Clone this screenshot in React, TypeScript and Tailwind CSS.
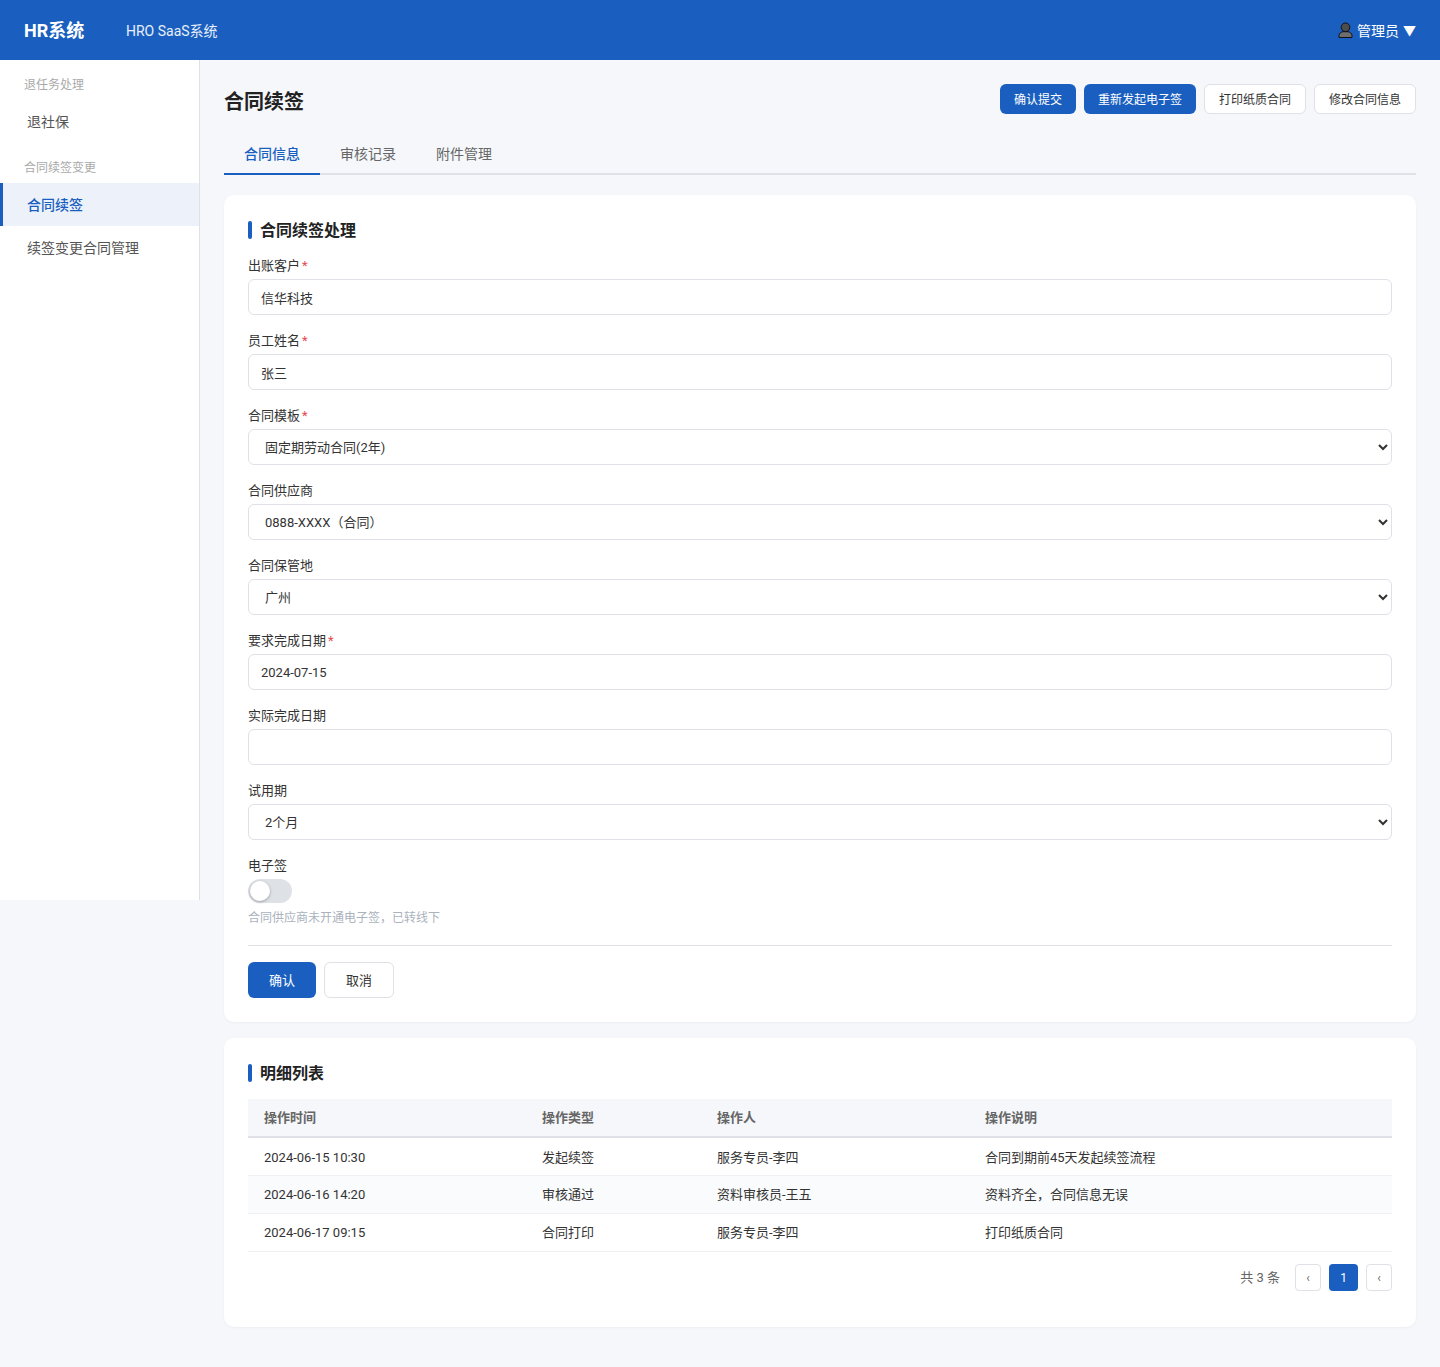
import React from "react";

const font = "font-['Roboto','Noto_Sans_CJK_SC',sans-serif]";

function Label({ text, required }: { text: string; required?: boolean }) {
  return (
    <label className="block text-[13px] leading-[22px] text-[#333] mb-[4px] h-[20px]">
      {text}
      {required && <span className="text-[#e5484d] ml-[2px]">*</span>}
    </label>
  );
}

const fieldCls =
  "block w-full h-[36px] px-[12px] text-[13px] text-[#333] bg-white border border-[#dfe1e6] rounded-[6px] outline-none";

function TextField({ label, value, required }: { label: string; value: string; required?: boolean }) {
  return (
    <div className="mb-[15px]">
      <Label text={label} required={required} />
      <input className={fieldCls} defaultValue={value} />
    </div>
  );
}

function SelectField({ label, value, required }: { label: string; value: string; required?: boolean }) {
  return (
    <div className="mb-[15px]">
      <Label text={label} required={required} />
      <select className={fieldCls} defaultValue={value}>
        <option>{value}</option>
      </select>
    </div>
  );
}

function SectionTitle({ children }: { children: React.ReactNode }) {
  return (
    <div className="flex items-center gap-[8px] h-[22px]">
      <span className="w-[4px] h-[18px] rounded-[2px] bg-[#1a5fbf]" />
      <h2 className="text-[16px] leading-[22px] pt-[2px] font-semibold text-[#222]">{children}</h2>
    </div>
  );
}

const rows = [
  ["2024-06-15 10:30", "发起续签", "服务专员-李四", "合同到期前45天发起续签流程"],
  ["2024-06-16 14:20", "审核通过", "资料审核员-王五", "资料齐全，合同信息无误"],
  ["2024-06-17 09:15", "合同打印", "服务专员-李四", "打印纸质合同"],
];

function UserIcon() {
  return (
    <svg width="15" height="16" viewBox="0 0 15 16" className="mr-[4px]">
      <path d="M1 15.5v-2.2c0-2 2.2-3.3 4-3.6h5c1.8.3 4 1.6 4 3.6v2.2z" fill="#6e6e6e" stroke="#111" strokeWidth="1" />
      <circle cx="7.5" cy="5.3" r="4.3" fill="#4d4d4d" stroke="#111" strokeWidth="1" />
    </svg>
  );
}

const primaryBtn = "h-[30px] pt-[2px] px-[14px] rounded-[6px] bg-[#1a5fbf] text-white text-[12px]";
const plainBtn = "h-[30px] pt-[2px] px-[14px] rounded-[6px] bg-white border border-[#dfe1e6] text-[#333] text-[12px]";

export default function App() {
  return (
    <div className={`${font} min-h-[1367px] bg-[#f5f7fb] text-[#333]`}>
      <header className="h-[60px] bg-[#1a5fbf] flex items-center justify-between pl-[24px] pr-[24px] text-white">
        <div className="flex items-center gap-[40px] pt-[2px]">
          <span className="w-[62px] text-[18px] font-bold leading-[28px]">HR系统</span>
          <span className="text-[14px] text-white/90">HRO SaaS系统</span>
        </div>
        <div className="flex items-center text-[14px]">
          <UserIcon />
          <span className="pt-[2px]">管理员</span>
          <span className="ml-[4px] pt-[2px] text-[13px]">▼</span>
        </div>
      </header>

      <div className="flex items-start">
        <aside className="w-[200px] h-[840px] shrink-0 bg-white border-r border-[#dfe1e6]">
          <div className="pt-[16px]">
            <div className="px-[24px] h-[18px] text-[12px] leading-[18px] text-[#aaa]">退任务处理</div>
            <div className="mt-[7px] h-[42px] pl-[27px] flex items-center text-[14px] text-[#555]">退社保</div>
          </div>
          <div className="pt-[15px]">
            <div className="px-[24px] h-[18px] text-[12px] leading-[20px] text-[#aaa]">合同续签变更</div>
            <div className="mt-[7px] h-[43px] pl-[24px] pt-[2px] flex items-center text-[14px] font-medium text-[#1a5fbf] bg-[#edf2fa] border-l-[3px] border-[#1a5fbf]">
              合同续签
            </div>
            <div className="h-[43px] pl-[27px] pt-[2px] flex items-center text-[14px] text-[#555]">续签变更合同管理</div>
          </div>
        </aside>

        <main className="flex-1 min-w-0 px-[24px] pt-[24px] pb-[40px]">
          <div className="flex items-start justify-between h-[48px]">
            <h1 className="text-[20px] leading-[36px] font-semibold text-[#222]">合同续签</h1>
            <div className="flex gap-[8px]">
              <button className={primaryBtn}>确认提交</button>
              <button className={primaryBtn}>重新发起电子签</button>
              <button className={plainBtn}>打印纸质合同</button>
              <button className={plainBtn}>修改合同信息</button>
            </div>
          </div>

          <div className="flex border-b-2 border-[#dfe1e6] h-[43px]">
            <div className="w-[96px] h-[43px] pt-[4px] flex items-center justify-center text-[14px] font-medium text-[#1a5fbf] border-b-2 border-[#1a5fbf]">合同信息</div>
            <div className="w-[96px] h-[41px] pt-[4px] flex items-center justify-center text-[14px] text-[#666]">审核记录</div>
            <div className="w-[96px] h-[41px] pt-[4px] flex items-center justify-center text-[14px] text-[#666]">附件管理</div>
          </div>

          <section className="mt-[20px] bg-white rounded-[10px] shadow-[0_1px_3px_rgba(0,0,0,0.04)] p-[24px] h-[827px]">
            <SectionTitle>合同续签处理</SectionTitle>
            <div className="mt-[14px]">
              <TextField label="出账客户" value="信华科技" required />
              <TextField label="员工姓名" value="张三" required />
              <SelectField label="合同模板" value="固定期劳动合同(2年)" required />
              <SelectField label="合同供应商" value="0888-XXXX（合同）" />
              <SelectField label="合同保管地" value="广州" />
              <TextField label="要求完成日期" value="2024-07-15" required />
              <TextField label="实际完成日期" value="" />
              <SelectField label="试用期" value="2个月" />
              <div>
                <Label text="电子签" />
                <div className="relative w-[44px] h-[24px] rounded-full bg-[#dee1e6]">
                  <span className="absolute left-[2px] top-[2px] w-[20px] h-[20px] rounded-full bg-white shadow-[0_1px_3px_rgba(0,0,0,0.3)]" />
                </div>
                <div className="mt-[6px] text-[12px] leading-[18px] text-[#aab2bd]">合同供应商未开通电子签，已转线下</div>
              </div>
            </div>
            <div className="mt-[18px] border-t border-[#dfe1e6] pt-[16px] flex gap-[8px]">
              <button className="w-[68px] h-[36px] pt-[2px] rounded-[6px] bg-[#1a5fbf] text-white text-[13px]">确认</button>
              <button className="w-[70px] h-[36px] pt-[2px] rounded-[6px] bg-white border border-[#dfe1e6] text-[#333] text-[13px]">取消</button>
            </div>
          </section>

          <section className="mt-[16px] bg-white rounded-[10px] shadow-[0_1px_3px_rgba(0,0,0,0.04)] p-[24px] h-[289px]">
            <SectionTitle>明细列表</SectionTitle>
            <table className="mt-[15px] w-full table-fixed border-collapse text-[13px]">
              <thead>
                <tr className="h-[38px] bg-[#f5f7fa] border-b-2 border-[#dfe1e6] text-[#666]">
                  <th className="w-[278px] pl-[16px] text-left font-semibold">操作时间</th>
                  <th className="w-[175px] pl-[16px] text-left font-semibold">操作类型</th>
                  <th className="w-[268px] pl-[16px] text-left font-semibold">操作人</th>
                  <th className="pl-[16px] text-left font-semibold">操作说明</th>
                </tr>
              </thead>
              <tbody>
                {rows.map((r, i) => (
                  <tr key={r[0]} className={`h-[38px] border-b border-[#eef0f3] ${i === 1 ? "bg-[#fafbfc]" : ""}`}>
                    {r.map((c) => (
                      <td key={c} className="pl-[16px] pt-[2px] text-[#333]">{c}</td>
                    ))}
                  </tr>
                ))}
              </tbody>
            </table>
            <div className="mt-[12px] flex items-center justify-end text-[13px]">
              <span className="text-[#666] mr-[15px] pt-[2px]">共 3 条</span>
              <button className="w-[26px] h-[27px] pt-[2px] rounded-[4px] border border-[#dfe1e6] bg-white text-[#666] text-[12px]">‹</button>
              <button className="ml-[8px] w-[29px] h-[27px] pt-[2px] rounded-[4px] bg-[#1a5fbf] text-white text-[12px]">1</button>
              <button className="ml-[8px] w-[26px] h-[27px] pt-[2px] rounded-[4px] border border-[#dfe1e6] bg-white text-[#666] text-[12px]">‹</button>
            </div>
          </section>
        </main>
      </div>
    </div>
  );
}
